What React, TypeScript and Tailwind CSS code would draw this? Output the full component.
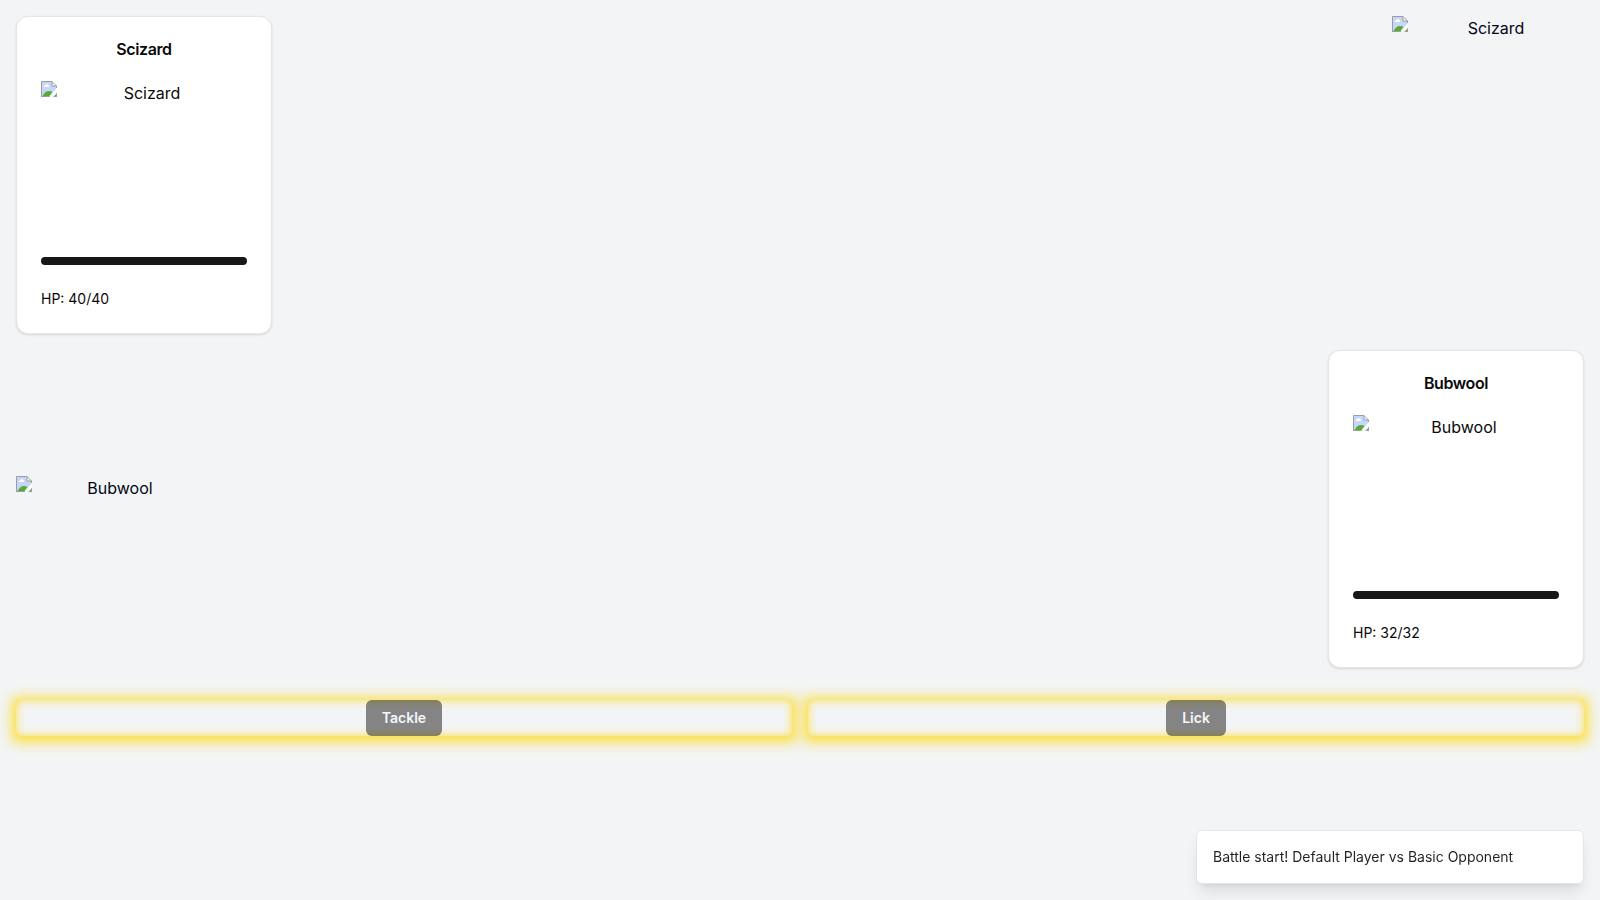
import React from "react";

type Creature = { name: string; hp: number; maxHp: number };

const opponent: Creature = { name: "Scizard", hp: 40, maxHp: 40 };
const player: Creature = { name: "Bubwool", hp: 32, maxHp: 32 };
const moves = ["Tackle", "Lick"];

function MissingImageIcon() {
  return (
    <svg className="size-4 shrink-0" viewBox="0 0 16 16" aria-hidden="true">
      <path d="M1 1h10v4h4v3L8.500 15H1z" fill="#c5d6f8" />
      <path d="M2.500 6a1.500 1.500 0 0 1 1.300-1.600A1.900 1.900 0 0 1 7.200 4 1.300 1.300 0 0 1 8 6z" fill="#fff" />
      <path d="M1.500 15C3 11.800 5.500 9.900 8 9.900c1.400 0 2.600.4 3.500 1.100L8.500 15z" fill="#57ab35" />
      <path d="M13 15 15 13V15z" fill="#57ab35" />
      <path d="M11 1v4h4z" fill="#fff" />
      <path
        d="M.5 16V.5H11L15.500 5v2M11 .5V5h4.500M0 15.500h9M12 15.500h4M15.500 11.500V16"
        fill="none"
        stroke="#9d9d9d"
      />
      <path d="M8.500 16 16 7.500v4L12 16z" fill="#fff" />
    </svg>
  );
}

function Sprite({ name, className }: { name: string; className: string }) {
  return (
    <div className={`flex items-start overflow-hidden ${className}`}>
      <MissingImageIcon />
      <span className="flex-1 text-center">{name}</span>
    </div>
  );
}

function CreatureCard({ creature }: { creature: Creature }) {
  const percent = (creature.hp / creature.maxHp) * 100;
  return (
    <section className="w-64 rounded-xl border border-neutral-200 bg-white p-6 text-neutral-950 shadow-sm">
      <h2 className="mb-6 text-center leading-none font-semibold tracking-tight">{creature.name}</h2>
      <Sprite name={creature.name} className="h-40 w-full" />
      <div
        role="progressbar"
        aria-label={`${creature.name} HP`}
        aria-valuenow={creature.hp}
        aria-valuemax={creature.maxHp}
        className="mt-4 h-2 overflow-hidden rounded-full bg-neutral-900/20"
      >
        <div className="h-full bg-neutral-900" style={{ width: `${percent}%` }} />
      </div>
      <p className="mt-6 text-sm">
        HP: {creature.hp}/{creature.maxHp}
      </p>
    </section>
  );
}

export default function App() {
  return (
    <main className="min-h-screen bg-gray-100 p-4 font-['Inter',sans-serif] text-slate-950">
      <div className="flex flex-col gap-4">
        <div className="flex items-start justify-between">
          <CreatureCard creature={opponent} />
          <Sprite name={opponent.name} className="size-48" />
        </div>
        <div className="flex items-end justify-between">
          <Sprite name={player.name} className="size-48" />
          <CreatureCard creature={player} />
        </div>
      </div>

      <div className="mt-8 grid grid-cols-2 gap-4">
        {moves.map((move) => (
          <div
            key={move}
            className="flex justify-center shadow-[0_2px_12px_4px_rgba(252,221,50,0.95),inset_0_0_10px_rgba(252,221,50,0.95)]"
          >
            <button
              type="button"
              disabled
              className="h-9 rounded-md bg-neutral-900 px-4 text-sm font-semibold text-neutral-50 opacity-50"
            >
              {move}
            </button>
          </div>
        ))}
      </div>

      <div role="status" className="fixed right-0 bottom-0 w-full max-w-[420px] p-4">
        <div className="rounded-md border border-neutral-200 bg-white p-4 text-sm text-neutral-950 shadow-lg">
          <p className="opacity-90">Battle start! Default Player vs Basic Opponent</p>
        </div>
      </div>
    </main>
  );
}
